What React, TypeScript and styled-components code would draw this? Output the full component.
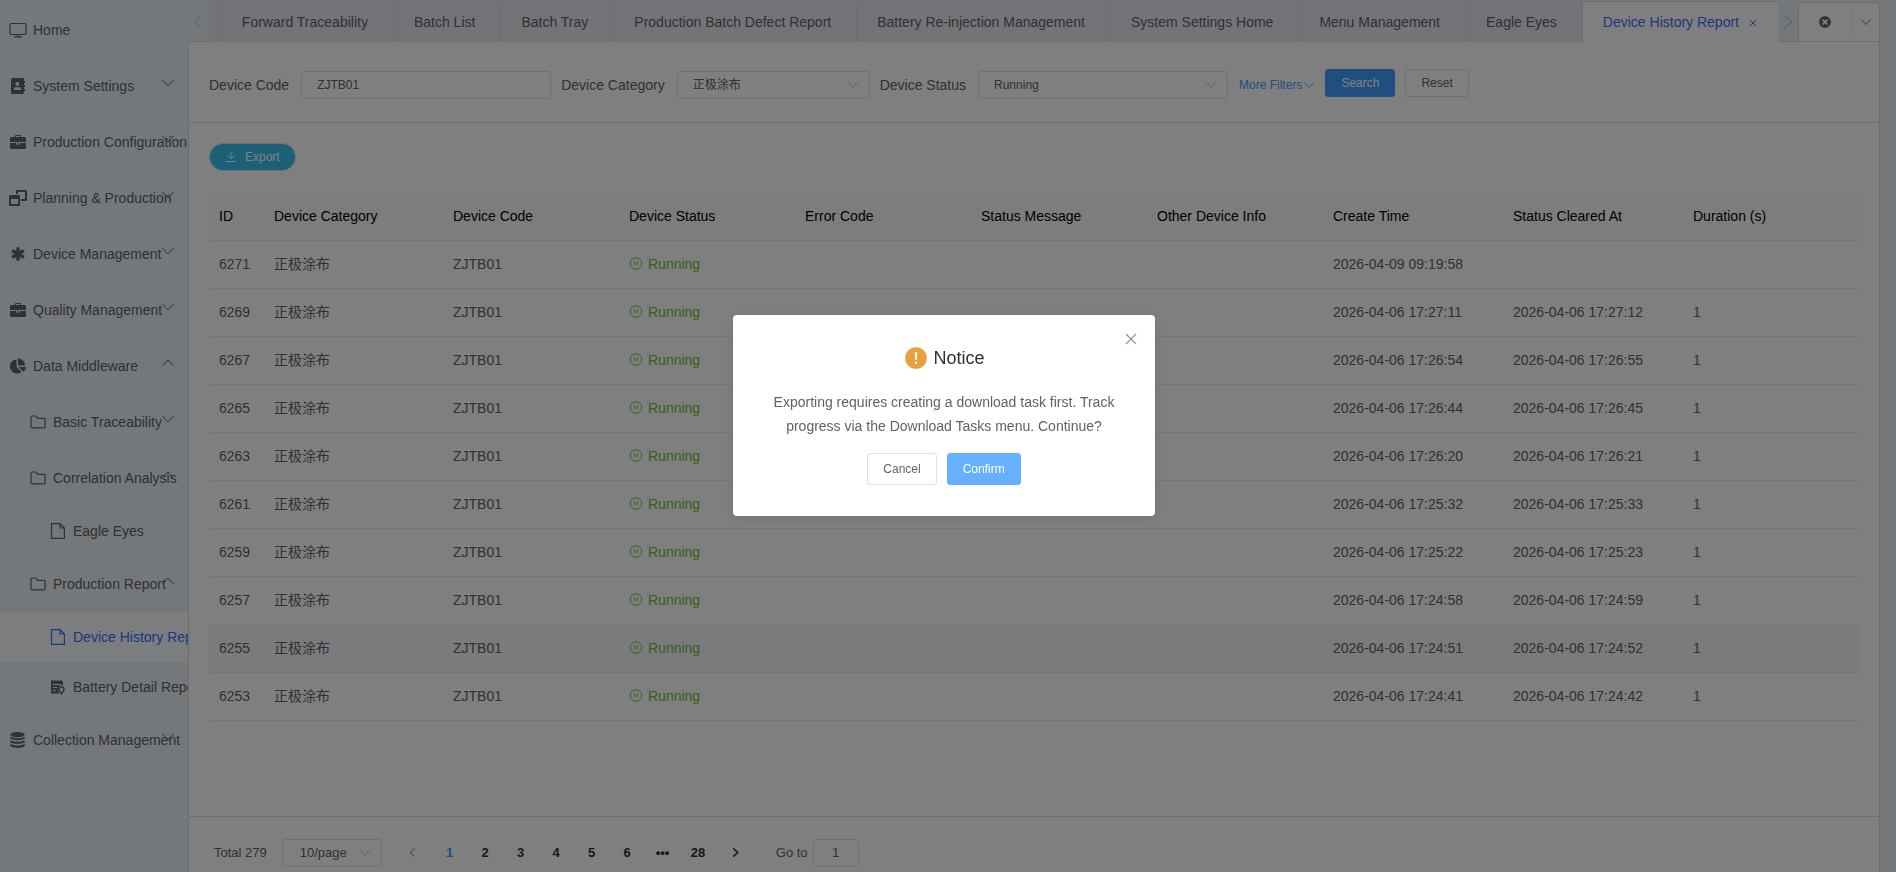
import React from 'react';
import styled, { createGlobalStyle, css } from 'styled-components';
import { FaAddressBook, FaChartPie, FaTimesCircle } from 'react-icons/fa';

const line = '#d8dce5';

const GlobalStyle = createGlobalStyle`
  * { box-sizing: border-box; }
  html, body { margin: 0; height: 100%; overflow: hidden; }
  #root { height: 100%; }
  body {
    background: #e8f0f5;
    color: #606266;
    font-family: "Liberation Sans", Arial, "Noto Sans CJK SC", sans-serif;
    font-size: 14px;
  }
  button, input, select { font-family: inherit; margin: 0; }
`;

const Page = styled.div`
  display: flex;
  height: 100vh;
  padding-right: 16px;
  overflow: hidden;
`;

/* ---------- side menu ---------- */
const Sidebar = styled.nav`
  flex: 0 0 188px;
  overflow: hidden;
  padding-top: 2px;
`;

const MenuItem = styled.a<{ $level: number; $leaf?: boolean; $active?: boolean }>`
  position: relative;
  display: flex;
  align-items: center;
  gap: 6px;
  height: ${(p) => (p.$leaf && p.$level === 2 ? 50 : 56)}px;
  padding-left: ${(p) => 8 + p.$level * 20}px;
  color: ${(p) => (p.$active ? '#3370ff' : '#606266')};
  background: ${(p) => (p.$active ? '#f8fbff' : 'transparent')};
  text-decoration: none;
  white-space: nowrap;
`;

const MenuIcon = styled.span`
  display: flex;
  justify-content: center;
  flex: 0 0 19px;
  svg { display: block; }
`;

const MenuArrow = styled.span`
  position: absolute;
  right: 14px;
  top: 50%;
  margin-top: -9px;
  line-height: 0;
`;

/* ---------- tabs ---------- */
const Main = styled.main`
  flex: 1;
  min-width: 0;
  display: flex;
  flex-direction: column;
`;

const TabBar = styled.div`
  display: flex;
  height: 42px;
  padding-top: 1px;
  border-bottom: 1px solid ${line};
`;

const ScrollButton = styled.button`
  flex: 0 0 20px;
  display: flex;
  align-items: center;
  justify-content: center;
  padding: 2px 0 0;
  border: 0;
  background: none;
  color: #c6ccd3;
`;

const TabStrip = styled.div`
  flex: 1;
  min-width: 0;
  display: flex;
  overflow: hidden;
  margin-bottom: -1px;
  border-top: 1px solid ${line};
  border-radius: 0 4px 0 0;
`;

const tabFace = css`
  background: #e6e9f0;
  border-bottom: 1px solid ${line};
`;

const TabRest = styled.span`
  flex: 1;
  ${tabFace}
`;

const Tab = styled.button<{ $active?: boolean }>`
  ${tabFace}
  display: flex;
  align-items: center;
  gap: 8px;
  flex: none;
  padding: 0 ${(p) => (p.$active ? 19 : 25)}px 0 20px;
  border-width: 0 0 1px 1px;
  border-style: solid;
  border-color: ${line};
  color: #606266;
  font-size: 14px;
  ${(p) => p.$active && css`
    background: #fff;
    border-bottom-color: #fff;
    color: #3370ff;
  `}
`;

const TabTools = styled.div`
  display: flex;
  align-items: center;
  flex: 0 0 82px;
  margin-top: 1px;
  background: #fff;
  border: 1px solid ${line};
  border-bottom: 0;
  border-radius: 4px 4px 0 0;
`;

const ToolButton = styled.button<{ $main?: boolean }>`
  display: flex;
  align-items: center;
  justify-content: center;
  flex: ${(p) => (p.$main ? '0 0 53px' : '1')};
  height: 28px;
  padding: 0;
  border: 0;
  border-right: ${(p) => (p.$main ? '1px solid #e8eaf0' : '0')};
  background: none;
  color: #606266;
`;

/* ---------- content ---------- */
const Panel = styled.section`
  flex: 1;
  min-height: 0;
  display: flex;
  flex-direction: column;
  background: #fff;
  border: solid ${line};
  border-width: 0 1px;
`;

const Filters = styled.form`
  display: flex;
  align-items: center;
  gap: 10px;
  height: 81px;
  padding: 5px 20px 0;
  border-bottom: 1px solid ${line};
`;

const Field = styled.div`
  display: flex;
  align-items: center;
  gap: 12px;
`;

const Box = styled.span<{ $width: number }>`
  position: relative;
  display: block;
  width: ${(p) => p.$width}px;
  color: #b4b8c0;
`;

const boxed = css`
  display: block;
  width: 100%;
  height: 28px;
  border: 1px solid #dcdfe6;
  border-radius: 4px;
  background: #fff;
  color: #606266;
  font-size: 12px;
  appearance: none;
  outline: none;
`;

const TextInput = styled.input<{ $center?: boolean }>`
  ${boxed}
  padding: 0 ${(p) => (p.$center ? 3 : 15)}px;
  text-align: ${(p) => (p.$center ? 'center' : 'left')};
  font-size: ${(p) => (p.$center ? 13 : 12)}px;
`;

const Select = styled.select<{ $indent?: boolean }>`
  ${boxed}
  padding: 0 24px 0 ${(p) => (p.$indent ? 17 : 15)}px;
  font-size: ${(p) => (p.$indent ? 13 : 12)}px;
`;

const SelectArrow = styled.span`
  position: absolute;
  right: 12px;
  top: 9px;
  line-height: 0;
  pointer-events: none;
`;

const MoreLink = styled.a`
  display: flex;
  align-items: center;
  gap: 2px;
  margin: 0 1px;
  color: #409eff;
  font-size: 12px;
  text-decoration: none;
`;

const Buttons = styled.div`
  display: flex;
  gap: 10px;
  padding-bottom: 3px;
`;

const Button = styled.button<{ $kind?: 'primary' | 'light'; $large?: boolean }>`
  height: ${(p) => (p.$large ? 32 : 28)}px;
  padding: 0 15px;
  border: 1px solid #dcdfe6;
  border-radius: 3px;
  background: #fff;
  color: #606266;
  font-size: 12px;
  ${(p) => p.$kind && css`
    background: ${p.$kind === 'light' ? '#66b1ff' : '#409eff'};
    border-color: ${p.$kind === 'light' ? '#66b1ff' : '#409eff'};
    color: #fff;
  `}
`;

const Body = styled.div`
  flex: 1;
  min-height: 0;
  padding: 20px;
`;

const ExportButton = styled.button`
  display: flex;
  align-items: center;
  gap: 9px;
  height: 28px;
  padding: 0 15px 0 16px;
  border: 1px solid #dcdfe6;
  border-radius: 14px;
  background: #36c0ec;
  color: #fff;
  font-size: 12px;
`;

const Table = styled.table`
  width: 100%;
  margin-top: 22px;
  table-layout: fixed;
  border-collapse: separate;
  border-spacing: 0;
`;

const cell = css`
  height: 48px;
  padding: 0 10px 2px;
  border-bottom: 1px solid #ebeef5;
  text-align: left;
  white-space: nowrap;
  line-height: 20px;
`;

const Th = styled.th<{ $width?: number }>`
  ${cell}
  width: ${(p) => (p.$width ? `${p.$width}px` : 'auto')};
  background: #fafafa;
  color: #000;
  font-weight: 400;
`;

const Td = styled.td`
  ${cell}
`;

const Row = styled.tr<{ $hover?: boolean }>`
  background: ${(p) => (p.$hover ? '#f5f7fa' : '#fff')};
`;

const Status = styled.span`
  display: flex;
  align-items: center;
  gap: 5px;
  color: #67c23a;
`;

/* ---------- pagination ---------- */
const Pager = styled.footer`
  display: flex;
  align-items: center;
  flex: 0 0 56px;
  padding: 16px 25px 0;
  border-top: 1px solid ${line};
  font-size: 13px;
`;

const PageSize = styled.div`
  margin-left: 15px;
`;

const PageButton = styled.button<{ $active?: boolean; $muted?: boolean }>`
  flex: 1;
  display: flex;
  align-items: center;
  justify-content: center;
  height: 28px;
  padding: 0;
  border: 0;
  background: none;
  color: ${(p) => (p.$active ? '#409eff' : p.$muted ? '#b4b8c0' : '#303133')};
  font-size: 13px;
  font-weight: 700;
`;

const Pages = styled.div`
  display: flex;
  width: 362px;
  margin-left: 11px;
`;

const PageNumbers = styled.div`
  display: flex;
  flex: 0 0 284px;
`;

const Jump = styled.label`
  display: flex;
  align-items: center;
  gap: 5px;
  margin-left: 21px;
`;

/* ---------- dialog ---------- */
const Overlay = styled.div`
  position: fixed;
  inset: 0;
  display: flex;
  align-items: center;
  justify-content: center;
  padding: 0 8px 42px 0;
  background: rgba(0, 0, 0, 0.5);
`;

const Dialog = styled.div`
  position: relative;
  display: flex;
  flex-direction: column;
  align-items: center;
  width: 422px;
  padding: 31px 30px;
  border-radius: 4px;
  background: #fff;
  box-shadow: 0 2px 12px rgba(0, 0, 0, 0.1);
`;

const DialogTitle = styled.h2`
  display: flex;
  align-items: center;
  gap: 6px;
  margin: 0;
  padding-left: 2px;
  color: #303133;
  font-size: 18px;
  font-weight: 400;
  line-height: 24px;
`;

const DialogText = styled.p`
  margin: 20px 0 15px;
  line-height: 24px;
  text-align: center;
`;

const DialogButtons = styled.div`
  display: flex;
  gap: 10px;
`;

const CloseButton = styled.button`
  position: absolute;
  top: 16px;
  right: 16px;
  padding: 0;
  border: 0;
  background: none;
  color: #909399;
  line-height: 0;
`;

/* ---------- icons ---------- */
type Dir = 'up' | 'down' | 'left' | 'right';

const Chevron = ({ dir = 'down', size = 12, stroke = 1 }: { dir?: Dir; size?: number; stroke?: number }) => {
  const d = {
    down: 'M.5 3L6 9l5.500-6',
    up: 'M.5 9L6 3l5.500 6',
    left: 'M9 .5L3 6l6 5.500',
    right: 'M3 .5L9 6l-6 5.500',
  }[dir];
  return (
    <svg width={size} height={size} viewBox="0 0 12 12" fill="none" stroke="currentColor" strokeWidth={stroke}>
      <path d={d} />
    </svg>
  );
};

const Monitor = () => (
  <svg width="18" height="16" viewBox="0 0 18 16" fill="none" stroke="currentColor" strokeWidth="1.200">
    <rect x="1" y="1.500" width="16" height="11" rx="1.500" />
    <path d="M9 12.500v2M5 14.800h8" />
  </svg>
);

const Briefcase = () => (
  <svg width="16" height="16" viewBox="0 0 16 16">
    <path fill="currentColor" fillRule="evenodd" d="M5 3V1.800Q5 1 5.800 1h4.400Q11 1 11 1.800V3h3.500Q16 3 16 4.500V8H0V4.500Q0 3 1.500 3zM6 3h4V2H6zM0 9h6v1.500h4V9h6v4.500q0 1.500-1.500 1.500h-13Q0 15 0 13.500zM7 8.500h2v1H7z" />
  </svg>
);

const Windows = () => (
  <svg width="18" height="16" viewBox="0 0 18 16">
    <path fill="currentColor" fillRule="evenodd" d="M8 0h9q1 0 1 1v9q0 1-1 1h-5V9h4V2H9v2H7V1q0-1 1-1zM1 5h9q1 0 1 1v9q0 1-1 1H1q-1 0-1-1V6q0-1 1-1zM2 9v5h7V9z" />
  </svg>
);

const Asterisk = () => (
  <svg width="14" height="14" viewBox="0 0 14 14" stroke="currentColor" strokeWidth="3.400" strokeLinecap="round">
    <path d="M7 1.700v10.600M2.300 4.300l9.400 5.400M11.700 4.300L2.300 9.700" />
  </svg>
);

const Database = () => (
  <svg width="15" height="16" viewBox="0 0 15 16" fill="currentColor">
    <ellipse cx="7.500" cy="2.600" rx="7.200" ry="2.600" />
    <path d="M.3 4.700q7.200 3 14.400 0v1.400c0 2.800-14.400 2.800-14.400 0zM.3 8.300q7.200 3 14.400 0v1.400c0 2.800-14.400 2.800-14.400 0zM.3 11.900q7.200 3 14.400 0v1.700c0 3.100-14.400 3.100-14.400 0z" />
  </svg>
);

const Folder = () => (
  <svg width="16" height="14" viewBox="0 0 16 14" fill="none" stroke="currentColor" strokeWidth="1.200">
    <path d="M1 12V1.800Q1 1 1.800 1h4l2 2.300h6.400q.8 0 .8.800V12q0 .8-.8.800H1.800Q1 12.800 1 12z" />
  </svg>
);

const Document = () => (
  <svg width="15" height="16" viewBox="0 0 15 16" fill="none" stroke="currentColor" strokeWidth="1.200">
    <path d="M1.500.6H10l4.400 4.400v10.400H1.500zM10 .6V5h4.400" />
  </svg>
);

const Report = () => (
  <svg width="14" height="15" viewBox="0 0 14 15">
    <path fill="currentColor" fillRule="evenodd" d="M0 0h1.500v1H3V0h1.500v1H6V0h1.500v1H9V0h1.500v1H12v4.200A3.700 3.700 0 0 0 7 9v1l1.500 3.500H0zM2 4v1h8V4zM2 7v1h4V7zM2 10v1h3v-1z" />
    <path fill="none" stroke="currentColor" strokeWidth="1.500" d="M10.500 13.800C9 12 8 10.800 8 9.300a2.500 2.500 0 0 1 5 0c0 1.500-1 2.700-2.500 4.500z" />
  </svg>
);

const Download = () => (
  <svg width="10" height="10" viewBox="0 0 10 10" fill="none" stroke="currentColor">
    <path d="M5 0v7M1.500 3.500L5 7l3.500-3.500M0 9.500h10" />
  </svg>
);

const Pause = () => (
  <svg width="14" height="13" viewBox="-.5 0 14 13" fill="none" stroke="currentColor">
    <circle cx="6.500" cy="6.500" r="5.800" />
    <path d="M5.200 4.500v4M7.800 4.500v4" />
  </svg>
);

const Cross = ({ size }: { size: number }) => (
  <svg width={size} height={size} viewBox="0 0 16 16" fill="none" stroke="currentColor" strokeWidth={1.200}>
    <path d="M3 3l10 10M13 3L3 13" />
  </svg>
);

const TabCross = () => (
  <svg width="12" height="12" viewBox="0 0 12 12" fill="none" stroke="currentColor">
    <path d="M3 4l6 6M9 4l-6 6" />
  </svg>
);

const Warning = () => (
  <svg width="22" height="22" viewBox="0 0 22 22">
    <circle cx="11" cy="11" r="10.800" fill="#e6a23c" />
    <path d="M9.700 5.200h2.600l-.5 7.800h-1.600z" fill="#fff" />
    <circle cx="11" cy="15.700" r="1.200" fill="#fff" />
  </svg>
);

/* ---------- data ---------- */
type Entry = { label: string; icon: React.ReactNode; level: number; arrow?: Dir; active?: boolean };

const menu: Entry[] = [
  { label: 'Home', icon: <Monitor />, level: 0 },
  { label: 'System Settings', icon: <FaAddressBook size={16} />, level: 0, arrow: 'down' },
  { label: 'Production Configuration', icon: <Briefcase />, level: 0, arrow: 'down' },
  { label: 'Planning & Production', icon: <Windows />, level: 0, arrow: 'down' },
  { label: 'Device Management', icon: <Asterisk />, level: 0, arrow: 'down' },
  { label: 'Quality Management', icon: <Briefcase />, level: 0, arrow: 'down' },
  { label: 'Data Middleware', icon: <FaChartPie size={16} />, level: 0, arrow: 'up' },
  { label: 'Basic Traceability', icon: <Folder />, level: 1, arrow: 'down' },
  { label: 'Correlation Analysis', icon: <Folder />, level: 1, arrow: 'up' },
  { label: 'Eagle Eyes', icon: <Document />, level: 2 },
  { label: 'Production Report', icon: <Folder />, level: 1, arrow: 'up' },
  { label: 'Device History Report', icon: <Document />, level: 2, active: true },
  { label: 'Battery Detail Report', icon: <Report />, level: 2 },
  { label: 'Collection Management', icon: <Database />, level: 0, arrow: 'down' },
];

const tabs = [
  'Forward Traceability', 'Batch List', 'Batch Tray', 'Production Batch Defect Report',
  'Battery Re-injection Management', 'System Settings Home', 'Menu Management', 'Eagle Eyes',
];

const columns: [string, number?][] = [
  ['ID', 55], ['Device Category', 179], ['Device Code'], ['Device Status'], ['Error Code'],
  ['Status Message'], ['Other Device Info'], ['Create Time', 180], ['Status Cleared At', 180], ['Duration (s)'],
];

const rows = [
  ['6271', '2026-04-09 09:19:58', '', ''],
  ['6269', '2026-04-06 17:27:11', '2026-04-06 17:27:12', '1'],
  ['6267', '2026-04-06 17:26:54', '2026-04-06 17:26:55', '1'],
  ['6265', '2026-04-06 17:26:44', '2026-04-06 17:26:45', '1'],
  ['6263', '2026-04-06 17:26:20', '2026-04-06 17:26:21', '1'],
  ['6261', '2026-04-06 17:25:32', '2026-04-06 17:25:33', '1'],
  ['6259', '2026-04-06 17:25:22', '2026-04-06 17:25:23', '1'],
  ['6257', '2026-04-06 17:24:58', '2026-04-06 17:24:59', '1'],
  ['6255', '2026-04-06 17:24:51', '2026-04-06 17:24:52', '1'],
  ['6253', '2026-04-06 17:24:41', '2026-04-06 17:24:42', '1'],
];

export default function App() {
  return (
    <>
      <GlobalStyle />
      <Page>
        <Sidebar>
          {menu.map((m) => (
            <MenuItem key={m.label} href="#" $level={m.level} $leaf={!m.arrow} $active={m.active}>
              <MenuIcon>{m.icon}</MenuIcon>
              {m.label}
              {m.arrow && <MenuArrow><Chevron dir={m.arrow} /></MenuArrow>}
            </MenuItem>
          ))}
        </Sidebar>
        <Main>
          <TabBar>
            <ScrollButton aria-label="Previous tabs"><Chevron dir="left" size={14} /></ScrollButton>
            <TabStrip>
              <TabRest />
              {tabs.map((t) => <Tab key={t}>{t}</Tab>)}
              <Tab $active>Device History Report<TabCross /></Tab>
            </TabStrip>
            <ScrollButton aria-label="Next tabs"><Chevron dir="right" size={14} /></ScrollButton>
            <TabTools>
              <ToolButton $main aria-label="Close tabs"><FaTimesCircle size={12} /></ToolButton>
              <ToolButton aria-label="Tab menu"><Chevron size={10} /></ToolButton>
            </TabTools>
          </TabBar>
          <Panel>
            <Filters onSubmit={(e) => e.preventDefault()}>
              <Field>
                <label htmlFor="code">Device Code</label>
                <Box $width={250}><TextInput id="code" defaultValue="ZJTB01" /></Box>
              </Field>
              <Field>
                <label htmlFor="category">Device Category</label>
                <Box $width={193}>
                  <Select id="category"><option>正极涂布</option></Select>
                  <SelectArrow><Chevron size={10} /></SelectArrow>
                </Box>
              </Field>
              <Field>
                <label htmlFor="status">Device Status</label>
                <Box $width={250}>
                  <Select id="status"><option>Running</option></Select>
                  <SelectArrow><Chevron size={10} /></SelectArrow>
                </Box>
              </Field>
              <MoreLink href="#">More Filters<Chevron size={10} /></MoreLink>
              <Buttons>
                <Button type="submit" $kind="primary">Search</Button>
                <Button type="reset">Reset</Button>
              </Buttons>
            </Filters>
            <Body>
              <ExportButton><Download />Export</ExportButton>
              <Table>
                <thead>
                  <tr>{columns.map(([name, width]) => <Th key={name} $width={width}>{name}</Th>)}</tr>
                </thead>
                <tbody>
                  {rows.map(([id, created, cleared, duration]) => (
                    <Row key={id} $hover={id === '6255'}>
                      <Td>{id}</Td>
                      <Td>正极涂布</Td>
                      <Td>ZJTB01</Td>
                      <Td><Status><Pause />Running</Status></Td>
                      <Td /><Td /><Td />
                      <Td>{created}</Td>
                      <Td>{cleared}</Td>
                      <Td>{duration}</Td>
                    </Row>
                  ))}
                </tbody>
              </Table>
            </Body>
            <Pager>
              <span>Total 279</span>
              <PageSize>
                <Box $width={100}>
                  <Select $indent aria-label="Rows per page"><option>10/page</option></Select>
                  <SelectArrow><Chevron size={10} /></SelectArrow>
                </Box>
              </PageSize>
              <Pages>
                <PageButton $muted aria-label="Previous page"><Chevron dir="left" size={9} stroke={2} /></PageButton>
                <PageNumbers>
                  {['1', '2', '3', '4', '5', '6', '•••', '28'].map((n) => (
                    <PageButton key={n} $active={n === '1'}>{n}</PageButton>
                  ))}
                </PageNumbers>
                <PageButton aria-label="Next page"><Chevron dir="right" size={9} stroke={2} /></PageButton>
              </Pages>
              <Jump>
                Go to
                <Box $width={46}><TextInput $center defaultValue="1" /></Box>
              </Jump>
            </Pager>
          </Panel>
        </Main>
      </Page>
      <Overlay>
        <Dialog role="dialog" aria-modal="true" aria-labelledby="notice-title">
          <CloseButton aria-label="Close"><Cross size={16} /></CloseButton>
          <DialogTitle id="notice-title"><Warning />Notice</DialogTitle>
          <DialogText>Exporting requires creating a download task first. Track progress via the Download Tasks menu. Continue?</DialogText>
          <DialogButtons>
            <Button $large>Cancel</Button>
            <Button $large $kind="light">Confirm</Button>
          </DialogButtons>
        </Dialog>
      </Overlay>
    </>
  );
}
